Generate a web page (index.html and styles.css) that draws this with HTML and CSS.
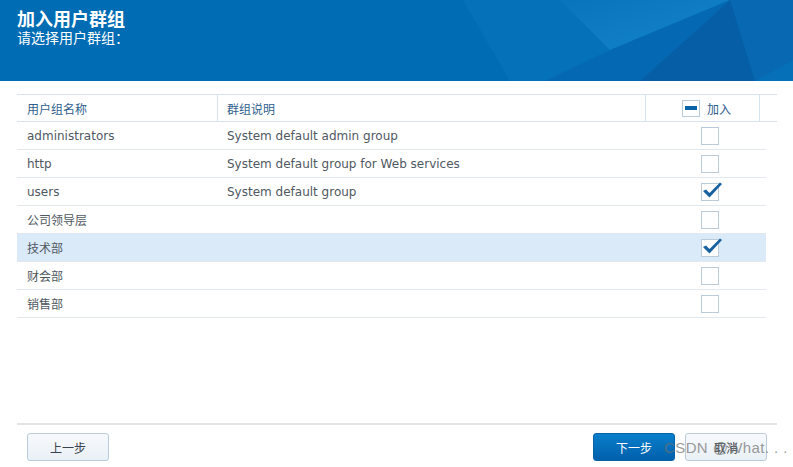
FILE: index.html
```html
<!DOCTYPE html>
<html lang="zh">
<head>
<meta charset="utf-8">
<link rel="stylesheet" href="styles.css">
</head>
<body>
<div class="app">
  <header class="hero">
    <svg class="hero-bg" width="793" height="81" viewBox="0 0 793 81" preserveAspectRatio="none">
      <defs>
        <linearGradient id="hl" x1="0" y1="0" x2="1" y2="1">
          <stop offset="0" stop-color="#1b86cc" stop-opacity="0.15"/>
          <stop offset="1" stop-color="#1a8cd3" stop-opacity="0.75"/>
        </linearGradient>
      </defs>
      <polygon points="463,0 793,0 793,81 510,81" fill="#0a76bd" opacity="0.55"/>
      <polygon points="560,0 730,0 610,50" fill="url(#hl)"/>
      <polygon points="610,50 730,0 640,81 545,81" fill="#0567b0" opacity="0.8"/>
      <polygon points="730,0 793,0 793,81 755,81" fill="#0868b1"/>
      <polygon points="730,0 755,81 640,81" fill="#055ea6"/>
      <polygon points="755,81 793,60 793,81" fill="#0570b8"/>
    </svg>
    <h1 class="title">加入用户群组</h1>
    <p class="subtitle">请选择用户群组：</p>
  </header>

  <main class="content">
    <div class="grid">
      <div class="row head">
        <div class="cell c-name">用户组名称</div>
        <div class="cell c-desc">群组说明</div>
        <div class="cell c-join"><span class="box partial"><span class="bar"></span></span><span class="join-label">加入</span></div>
        <div class="cell c-spacer"></div>
      </div>
      <div class="row">
        <div class="cell c-name">administrators</div>
        <div class="cell c-desc">System default admin group</div>
        <div class="cell c-join"><span class="box"></span></div>
      </div>
      <div class="row">
        <div class="cell c-name">http</div>
        <div class="cell c-desc">System default group for Web services</div>
        <div class="cell c-join"><span class="box"></span></div>
      </div>
      <div class="row">
        <div class="cell c-name">users</div>
        <div class="cell c-desc">System default group</div>
        <div class="cell c-join"><span class="box"><svg class="tick" width="22" height="20" viewBox="0 0 22 20"><path d="M2 11 L5 9.5 L8.5 13 L19 2.5 L21 4 L8.5 17.5 Z" fill="#17609f"/></svg></span></div>
      </div>
      <div class="row">
        <div class="cell c-name">公司领导层</div>
        <div class="cell c-desc"></div>
        <div class="cell c-join"><span class="box"></span></div>
      </div>
      <div class="row selected">
        <div class="cell c-name">技术部</div>
        <div class="cell c-desc"></div>
        <div class="cell c-join"><span class="box"><svg class="tick" width="22" height="20" viewBox="0 0 22 20"><path d="M2 11 L5 9.5 L8.5 13 L19 2.5 L21 4 L8.5 17.5 Z" fill="#17609f"/></svg></span></div>
      </div>
      <div class="row">
        <div class="cell c-name">财会部</div>
        <div class="cell c-desc"></div>
        <div class="cell c-join"><span class="box"></span></div>
      </div>
      <div class="row">
        <div class="cell c-name">销售部</div>
        <div class="cell c-desc"></div>
        <div class="cell c-join"><span class="box"></span></div>
      </div>
    </div>
  </main>

  <footer class="footer">
    <button class="btn">上一步</button>
    <div class="footer-right">
      <button class="btn primary">下一步</button>
      <button class="btn">取消</button>
    </div>
  </footer>
  <div class="watermark">CSDN @What. . .</div>
</div>
</body>
</html>
```
FILE: styles.css
```css
* { box-sizing: border-box; }
html, body { margin: 0; padding: 0; }
body {
  width: 793px;
  height: 467px;
  background: #ffffff;
  font-family: "DejaVu Sans", "Noto Sans CJK SC", sans-serif;
  overflow: hidden;
}
.app {
  position: relative;
  width: 793px;
  height: 467px;
  display: flex;
  flex-direction: column;
}
.hero {
  position: relative;
  height: 81px;
  flex: 0 0 81px;
  background: #006cb4;
  padding: 7px 0 0 17px;
  color: #ffffff;
  overflow: hidden;
}
.hero-bg {
  position: absolute;
  left: 0;
  top: 0;
}
.title {
  position: relative;
  margin: 0;
  font-family: "Noto Sans CJK SC", sans-serif;
  font-size: 18px;
  font-weight: 700;
  line-height: 22px;
}
.subtitle {
  position: relative;
  margin: 0;
  font-family: "Noto Sans CJK SC", sans-serif;
  font-size: 14px;
  line-height: 17px;
}
.content {
  flex: 1 1 auto;
  padding: 13px 16px 0 17px;
}
.grid {
  display: flex;
  flex-direction: column;
}
.row {
  display: flex;
  height: 28px;
  width: 749px;
  border-bottom: 1px solid #e3e8ee;
  color: #4f5861;
  font-size: 12px;
}
.row.head {
  width: 760px;
  border-top: 1px solid #d6e2ee;
  border-bottom: 1px solid #d6e2ee;
  color: #2f5e8c;
  font-family: "Noto Sans CJK SC", sans-serif;
}
.row.selected {
  background: #daeaf9;
}
.cell {
  display: flex;
  align-items: center;
  padding-left: 10px;
  white-space: nowrap;
}
.c-name { width: 201px; font-family: "DejaVu Sans", "Noto Sans CJK SC", sans-serif; }
.c-desc { width: 428px; padding-left: 9px; }
.c-join { flex: 1 1 auto; justify-content: center; padding-left: 8px; }
.head .cell { border-right: 1px solid #d6e2ee; font-family: "Noto Sans CJK SC", sans-serif; }
.head .c-join { width: 114px; flex: 0 0 114px; }
.head .c-spacer { flex: 1 1 auto; border-right: none; }
.box {
  position: relative;
  display: block;
  width: 18px;
  height: 18px;
  border: 1px solid #bccbd8;
  background: #ffffff;
}
.head .box { width: 18px; height: 17px; }
.bar {
  position: absolute;
  left: 2px;
  top: 5px;
  width: 12px;
  height: 4px;
  background: #0b63a8;
}
.join-label { margin-left: 7px; }
.tick {
  position: absolute;
  left: -1px;
  top: -4px;
}
.footer {
  flex: 0 0 44px;
  margin: 0 16px 0 17px;
  border-top: 2px solid #e2e4e6;
  padding: 8px 10px 0 10px;
  display: flex;
  justify-content: space-between;
  align-items: flex-start;
}
.footer-right {
  display: flex;
  gap: 10px;
}
.btn {
  width: 82px;
  height: 28px;
  border: 1px solid #bccbd9;
  border-radius: 3px;
  background: linear-gradient(#f7f9fc, #e9f0f6);
  color: #39434d;
  font-family: "Noto Sans CJK SC", sans-serif;
  font-size: 12px;
  padding: 0;
}
.btn.primary {
  border-color: #0862a8;
  background: linear-gradient(#0a7fcb, #005fab);
  color: #ffffff;
}
.watermark {
  position: absolute;
  left: 664px;
  top: 439px;
  font-family: "Liberation Sans", Arial, sans-serif;
  font-size: 15px;
  letter-spacing: 0.4px;
  color: rgba(110, 110, 110, 0.7);
  white-space: nowrap;
}
```
